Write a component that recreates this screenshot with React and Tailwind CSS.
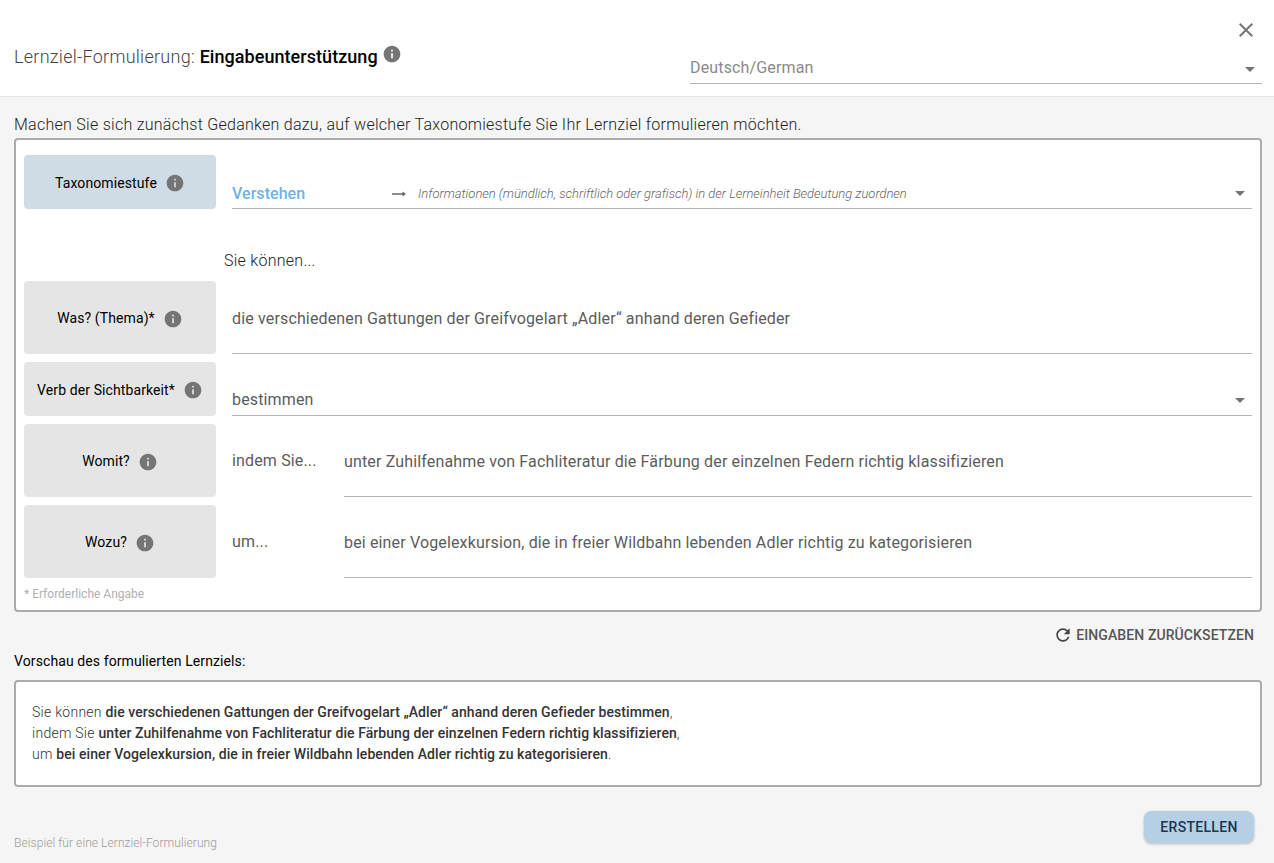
import React from 'react';

function InfoIcon({ className = '' }) {
    return (
        <svg viewBox="0 0 24 24" className={`shrink-0 fill-[#757575] ${className}`}>
            <path d="M12 2C6.48 2 2 6.48 2 12s4.48 10 10 10 10-4.48 10-10S17.52 2 12 2zm1 15h-2v-6h2v6zm0-8h-2V7h2v2z" />
        </svg>
    );
}

function Caret({ className = '' }) {
    return (
        <svg viewBox="0 0 10 5" className={`w-[10px] h-[5px] fill-[#757575] ${className}`}>
            <path d="M0 0l5 5 5-5z" />
        </svg>
    );
}

function LabelBox({ label, height, blue = false }) {
    return (
        <div className={`w-[192px] ${height} shrink-0 rounded-[4px] flex items-center justify-center gap-2 pt-[2px] text-[14px] tracking-[0.1px] text-black ${blue ? 'bg-[#cfdce6]' : 'bg-[#e5e5e5]'}`}>
            <span>{label}</span>
            <InfoIcon className="w-[20px] h-[20px]" />
        </div>
    );
}

function TextRow({ label, prefix, value }) {
    return (
        <div className="flex h-[73px]">
            <LabelBox label={label} height="h-[73px]" />
            <div className="flex-1 ml-4 flex text-[16px] leading-[22px] tracking-[0.15px] text-[#5c5c5c]">
                {prefix && <div className="w-[112px] shrink-0 pt-[26px]">{prefix}</div>}
                <div className="flex-1 pt-[27px] border-b border-[#b5b5b5]">{value}</div>
            </div>
        </div>
    );
}

export default function App() {
    return (
        <div className="w-[1274px] h-[863px] overflow-hidden bg-[#f5f5f5] font-['Roboto',sans-serif]">
            {/* Header */}
            <div className="h-[97px] bg-white border-b border-[#e4e4e4] flex justify-between pl-[14px] pr-3">
                <div className="pt-[44px] flex items-start text-[18px] leading-[26px] text-[#444]">
                    <span className="font-light tracking-[0.27px]">Lernziel-Formulierung:&nbsp;</span>
                    <span className="font-medium tracking-[0.05px] text-black">Eingabeunterstützung</span>
                    <InfoIcon className="w-[20px] h-[20px] ml-1" />
                </div>
                <div className="w-[572px] flex flex-col">
                    <div className="flex justify-end pt-[18px] pr-1 h-[50px]">
                        <svg viewBox="0 0 24 24" className="w-6 h-6 fill-[#757575]">
                            <path d="M19 6.41L17.59 5 12 10.59 6.41 5 5 6.41 10.59 12 5 17.59 6.41 19 12 13.41 17.59 19 19 17.59 13.41 12z" />
                        </svg>
                    </div>
                    <div className="h-[34px] flex items-end justify-between border-b border-[#b5b5b5] pb-[3px] pr-[7px] text-[16px] leading-[24px] tracking-[0.15px] text-[#8a8a8a]">
                        <span>Deutsch/German</span>
                        <Caret className="mb-[8px]" />
                    </div>
                </div>
            </div>

            <div className="pl-[14px] pr-3">
                <p className="pt-[18px] text-[16px] leading-[20px] font-light tracking-[0.27px] text-[#222]">
                    Machen Sie sich zunächst Gedanken dazu, auf welcher Taxonomiestufe Sie Ihr Lernziel formulieren möchten.
                </p>

                {/* Form card */}
                <div className="mt-[3px] h-[474px] bg-white border-2 border-[#ababab] rounded-[4px] pt-[15px] px-2">
                    <div className="flex h-[54px]">
                        <LabelBox label="Taxonomiestufe" height="h-[54px]" blue />
                        <div className="flex-1 ml-4 flex items-end border-b border-[#b5b5b5] pb-[4px] pr-[7px]">
                            <span className="w-[160px] shrink-0 text-[16px] font-medium leading-[20px] tracking-[0.05px] text-[#6db3e8]">Verstehen</span>
                            <svg viewBox="0 0 14 8" className="w-[14px] h-[8px] shrink-0 mb-[6px] mr-[12px] fill-[#666]">
                                <path d="M0 3.25h10.5V1.5L14 4l-3.5 2.5V4.75H0z" />
                            </svg>
                            <span className="flex-1 text-[13px] leading-[20px] italic font-light tracking-[-0.03px] text-[#666]">
                                Informationen (mündlich, schriftlich oder grafisch) in der Lerneinheit Bedeutung zuordnen
                            </span>
                            <Caret className="mb-[8px]" />
                        </div>
                    </div>

                    <div className="h-[72px] pl-[200px] pt-[42px] text-[16px] leading-[20px] font-light tracking-[0.27px] text-[#222]">Sie können...</div>

                    <div className="flex flex-col gap-2">
                        <TextRow label="Was? (Thema)*" value="die verschiedenen Gattungen der Greifvogelart „Adler“ anhand deren Gefieder" />
                        <div className="flex h-[54px]">
                            <LabelBox label="Verb der Sichtbarkeit*" height="h-[54px]" />
                            <div className="flex-1 ml-4 flex items-end justify-between border-b border-[#b5b5b5] pb-[4px] pr-[7px] text-[16px] leading-[22px] tracking-[0.15px] text-[#5c5c5c]">
                                <span>bestimmen</span>
                                <Caret className="mb-[8px]" />
                            </div>
                        </div>
                        <TextRow label="Womit?" prefix="indem Sie..." value="unter Zuhilfenahme von Fachliteratur die Färbung der einzelnen Federn richtig klassifizieren" />
                        <TextRow label="Wozu?" prefix="um..." value="bei einer Vogelexkursion, die in freier Wildbahn lebenden Adler richtig zu kategorisieren" />
                    </div>
                    <p className="mt-[8px] text-[12px] leading-[16px] text-[#b0b0b0]">* Erforderliche Angabe</p>
                </div>

                {/* Reset */}
                <div className="flex justify-end items-center gap-[3px] pr-2 pt-[10px] h-[36px] text-[14px] font-medium tracking-[0.1px] text-[#555]">
                    <svg viewBox="0 0 24 24" className="w-5 h-5 fill-[#444]">
                        <path d="M17.65 6.35C16.2 4.9 14.21 4 12 4c-4.42 0-7.99 3.58-7.99 8s3.57 8 7.99 8c3.73 0 6.84-2.55 7.73-6h-2.08c-.82 2.33-3.04 4-5.65 4-3.31 0-6-2.69-6-6s2.69-6 6-6c1.66 0 3.14.69 4.22 1.78L13 11h7V4l-2.35 2.35z" />
                    </svg>
                    <span>EINGABEN ZURÜCKSETZEN</span>
                </div>

                <p className="mt-[3px] text-[14px] leading-[20px] tracking-[0.1px] text-black">Vorschau des formulierten Lernziels:</p>

                {/* Preview */}
                <div className="mt-[9px] h-[107px] bg-white border-2 border-[#ababab] rounded-[4px] pl-4 pt-[20px] text-[14px] leading-[21px] font-light tracking-[0.27px] text-[#333]">
                    <p>Sie können <span className="font-medium tracking-[0.07px]">die verschiedenen Gattungen der Greifvogelart „Adler“ anhand deren Gefieder bestimmen</span>,</p>
                    <p>indem Sie <span className="font-medium tracking-[0.07px]">unter Zuhilfenahme von Fachliteratur die Färbung der einzelnen Federn richtig klassifizieren</span>,</p>
                    <p>um <span className="font-medium tracking-[0.07px]">bei einer Vogelexkursion, die in freier Wildbahn lebenden Adler richtig zu kategorisieren</span>.</p>
                </div>

                {/* Footer */}
                <div className="flex justify-between items-end pr-2 mt-6">
                    <span className="text-[12px] leading-[16px] font-light tracking-[0.08px] text-[#9a9a9a] mb-[-8px]">Beispiel für eine Lernziel-Formulierung</span>
                    <button className="w-[110px] h-[32px] rounded-[8px] bg-[#b5d0e4] shadow-[0_1px_3px_rgba(0,0,0,0.25)] text-[14px] font-medium tracking-[0.3px] text-[#1f3450]">ERSTELLEN</button>
                </div>
            </div>
        </div>
    );
}
